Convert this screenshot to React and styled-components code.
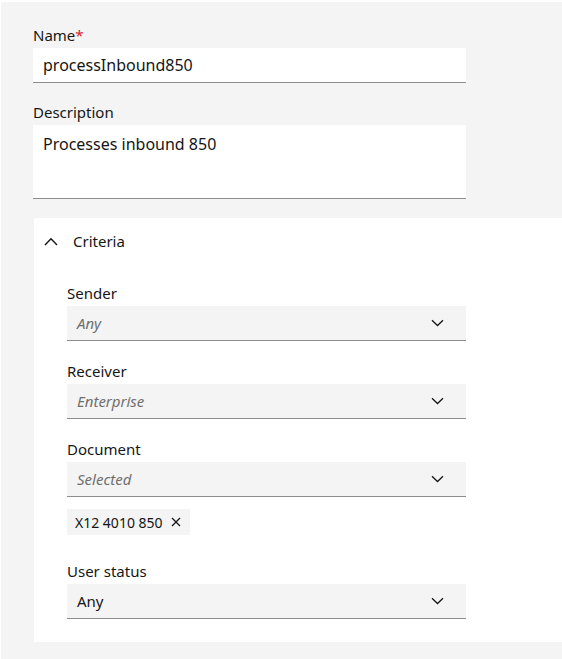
import React from 'react'
import styled, { createGlobalStyle } from 'styled-components'

const Global = createGlobalStyle`
  html, body {
    margin: 0;
    padding: 0;
    background: #ffffff;
  }
  body {
    font-family: "Noto Sans", "Liberation Sans", Arial, sans-serif;
    color: #161616;
  }
`

const ChevronDown = () => (
  <svg width="13" height="8" viewBox="0 0 13 8" fill="none">
    <path d="M1 1.2 L6.5 6.5 L12 1.2" stroke="#161616" strokeWidth="1.3" />
  </svg>
)

const ChevronUp = () => (
  <svg width="14" height="9" viewBox="0 0 14 9" fill="none">
    <path d="M1 8 L7 1.8 L13 8" stroke="#161616" strokeWidth="1.4" />
  </svg>
)

const Close = () => (
  <svg width="10" height="10" viewBox="0 0 10 10" fill="none">
    <path d="M1 1 L9 9 M9 1 L1 9" stroke="#161616" strokeWidth="1.3" />
  </svg>
)

const fields = [
  { label: 'Sender', value: 'Any', placeholder: true },
  { label: 'Receiver', value: 'Enterprise', placeholder: true },
  { label: 'Document', value: 'Selected', placeholder: true, tags: ['X12 4010 850'] },
  { label: 'User status', value: 'Any', placeholder: false },
]

const App = () => {
  return (
    <>
      <Global />
      <Page>
        <Field>
          <Label>Name<Req>*</Req></Label>
          <TextInput>processInbound850</TextInput>
        </Field>
        <Field>
          <Label>Description</Label>
          <TextArea>Processes inbound 850</TextArea>
        </Field>
        <Panel>
          <Header>
            <ChevronUp />
            <Title>Criteria</Title>
          </Header>
          <Body>
            {fields.map((f, i) => (
              <SelectField key={i} last={i === fields.length - 1}>
                <Label>{f.label}</Label>
                <Select>
                  <SelectText placeholder={f.placeholder ? 1 : 0}>{f.value}</SelectText>
                  <ChevronDown />
                </Select>
                {f.tags && (
                  <Tags>
                    {f.tags.map((t, j) => (
                      <Tag key={j}>
                        {t}
                        <Close />
                      </Tag>
                    ))}
                  </Tags>
                )}
              </SelectField>
            ))}
          </Body>
        </Panel>
      </Page>
    </>
  )
}

const Page = styled.div`
  margin: 2px 0 0 1px;
  width: 561px;
  height: 657px;
  box-sizing: border-box;
  background: #f4f4f4;
  padding: 23px 0 0 32px;
`
const Field = styled.div`
  display: flex;
  flex-direction: column;
  width: 433px;
  margin-bottom: 19px;
`
const Label = styled.div`
  font-size: 15px;
  line-height: 20px;
  margin-bottom: 3px;
  color: #161616;
`
const Req = styled.span`
  color: #da1e28;
`
const TextInput = styled.div`
  height: 35px;
  box-sizing: border-box;
  background: #ffffff;
  border-bottom: 1px solid #8d8d8d;
  padding: 0 10px;
  display: flex;
  align-items: center;
  font-size: 16px;
`
const TextArea = styled.div`
  height: 74px;
  box-sizing: border-box;
  background: #ffffff;
  border-bottom: 1px solid #8d8d8d;
  padding: 9px 10px;
  font-size: 16px;
  line-height: 20px;
`
const Panel = styled.div`
  margin: 1px 0 0 1px;
  background: #ffffff;
  padding-bottom: 23px;
`
const Header = styled.div`
  height: 46px;
  display: flex;
  align-items: center;
  gap: 15px;
  padding-left: 10px;
`
const Title = styled.span`
  font-size: 15px;
`
const Body = styled.div`
  padding: 19px 0 0 33px;
`
const SelectField = styled.div`
  display: flex;
  flex-direction: column;
  width: 399px;
  margin-bottom: ${p => (p.last ? 0 : '20px')};
`
const Select = styled.div`
  height: 35px;
  box-sizing: border-box;
  background: #f4f4f4;
  border-bottom: 1px solid #8d8d8d;
  display: flex;
  align-items: center;
  justify-content: space-between;
  padding: 0 22px 0 10px;
`
const SelectText = styled.span`
  font-size: 15px;
  font-style: ${p => (p.placeholder ? 'italic' : 'normal')};
  color: ${p => (p.placeholder ? '#6f6f6f' : '#161616')};
`
const Tags = styled.div`
  display: flex;
  gap: 8px;
  margin: 12px 0 6px;
`
const Tag = styled.div`
  height: 26px;
  display: flex;
  align-items: center;
  gap: 8px;
  padding: 0 9px 0 8px;
  background: #f4f4f4;
  font-size: 14px;
`

export default App
